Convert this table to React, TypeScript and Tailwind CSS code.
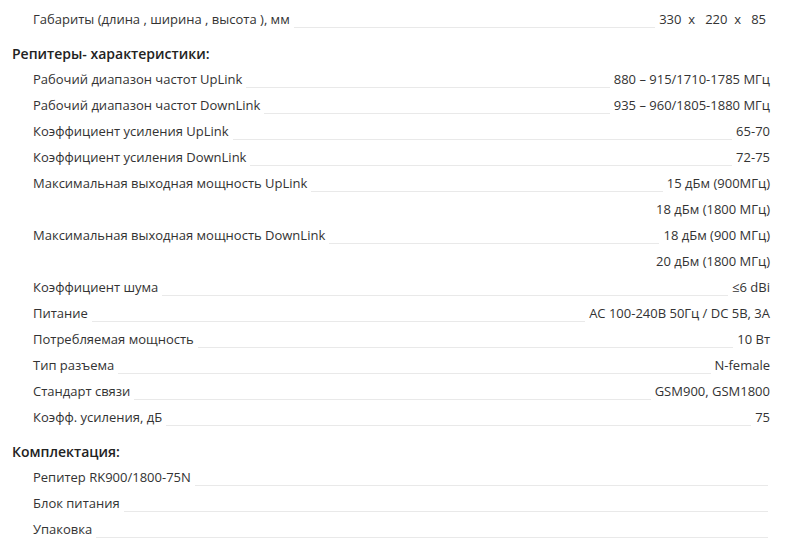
type Row = { label?: string; value?: string; pad?: boolean };

const dims: Row[] = [{ label: 'Габариты (длина , ширина , высота ), мм', value: '330  x   220  x   85', pad: true }];

const specs: Row[] = [
  { label: 'Рабочий диапазон частот UpLink', value: '880 – 915/1710-1785 МГц' },
  { label: 'Рабочий диапазон частот DownLink', value: '935 – 960/1805-1880 МГц' },
  { label: 'Коэффициент усиления UpLink', value: '65-70' },
  { label: 'Коэффициент усиления DownLink', value: '72-75' },
  { label: 'Максимальная выходная мощность UpLink', value: '15 дБм (900МГц)' },
  { value: '18 дБм (1800 МГц)' },
  { label: 'Максимальная выходная мощность DownLink', value: '18 дБм (900 МГц)' },
  { value: '20 дБм (1800 МГц)' },
  { label: 'Коэффициент шума', value: '≤6 dBi' },
  { label: 'Питание', value: 'AC 100-240В 50Гц / DC 5В, 3А' },
  { label: 'Потребляемая мощность', value: '10 Вт' },
  { label: 'Тип разъема', value: 'N-female' },
  { label: 'Стандарт связи', value: 'GSM900, GSM1800' },
  { label: 'Коэфф. усиления, дБ', value: '75' },
];

const kit: Row[] = [
  { label: 'Репитер RK900/1800-75N' },
  { label: 'Блок питания' },
  { label: 'Упаковка' },
];

function SpecRow({ row }: { row: Row }) {
  if (!row.label) {
    return (
      <div className="flex h-[26px] justify-end leading-[26px]">
        <span className="whitespace-pre">{row.value}</span>
      </div>
    );
  }
  return (
    <div className="flex h-[26px] pl-[21px] leading-[26px]">
      <span className="whitespace-pre">{row.label}</span>
      <div className={`ml-1 flex-1 border-b border-[#e9e9e9] mb-[4px] ${row.value ? 'mr-1' : 'mr-[2px]'}`} />
      {row.value && <span className={`whitespace-pre ${row.pad ? 'pr-1' : ''}`}>{row.value}</span>}
    </div>
  );
}

function Heading({ children }: { children: string }) {
  return (
    <h3 className="mt-[10px] h-[24px] text-[14px] font-semibold leading-[24px] text-[#222]">{children}</h3>
  );
}

export default function App() {
  return (
    <div className="min-h-screen bg-white pt-[6px] pl-3 text-[13px] text-[#333]" style={{ fontFamily: '"Open Sans", "Noto Sans", sans-serif' }}>
      <div className="w-[758px]">
        {dims.map((r, i) => (
          <SpecRow key={i} row={r} />
        ))}
        <Heading>Репитеры- характеристики:</Heading>
        {specs.map((r, i) => (
          <SpecRow key={i} row={r} />
        ))}
        <Heading>Комплектация:</Heading>
        {kit.map((r, i) => (
          <SpecRow key={i} row={r} />
        ))}
      </div>
    </div>
  );
}
